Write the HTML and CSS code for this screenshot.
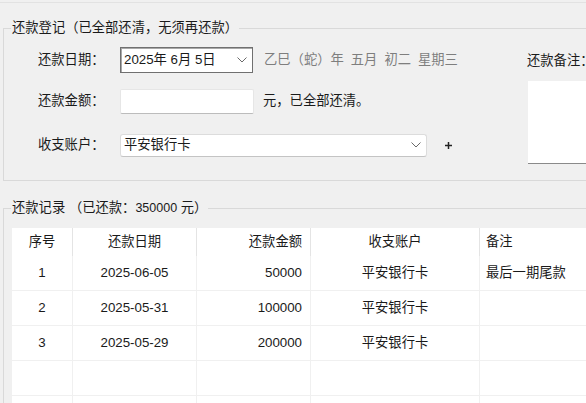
FILE: index.html
```html
<!DOCTYPE html>
<html lang="zh-CN">
<head>
<meta charset="utf-8">
<title>还款登记</title>
<link rel="stylesheet" href="styles.css">
</head>
<body>
<div class="topbar"></div>

<section class="group group-reg">
  <div class="group-title">还款登记（已全部还清，无须再还款）</div>
  <div class="reg-body">
    <div class="form">
      <div class="row row-date">
        <span class="label">还款日期：</span>
        <div class="datepicker">
          <span>2025年 6月 5日</span>
          <svg class="chev" width="10" height="6" viewBox="0 0 10 6"><path d="M0.5 0.5 L5 5 L9.5 0.5" fill="none" stroke="#6a6a6a" stroke-width="1"/></svg>
        </div>
        <span class="lunar">乙巳（蛇）年<span class="sp">五月</span><span class="sp">初二</span><span class="sp">星期三</span></span>
      </div>
      <div class="row row-amount">
        <span class="label">还款金额：</span>
        <div class="textbox"></div>
        <span class="note">元，已全部还清。</span>
      </div>
      <div class="row row-account">
        <span class="label">收支账户：</span>
        <div class="combo">
          <span>平安银行卡</span>
          <svg class="chev" width="10" height="6" viewBox="0 0 10 6"><path d="M0.5 0.5 L5 5 L9.5 0.5" fill="none" stroke="#6a6a6a" stroke-width="1"/></svg>
        </div>
        <svg class="plus" width="7" height="7" viewBox="0 0 7 7"><path d="M3.5 0 V7 M0 3.5 H7" stroke="#222" stroke-width="1.5"/></svg>
      </div>
    </div>
    <div class="remark">
      <div class="remark-label">还款备注：</div>
      <div class="remark-box"></div>
    </div>
  </div>
</section>

<section class="group group-rec">
  <div class="group-title">还款记录 （已还款：<span class="num">350000</span> 元）</div>
  <table class="records">
    <colgroup>
      <col class="c1"><col class="c2"><col class="c3"><col class="c4"><col class="c5">
    </colgroup>
    <thead>
      <tr>
        <th class="center">序号</th>
        <th class="center">还款日期</th>
        <th class="right">还款金额</th>
        <th class="center">收支账户</th>
        <th class="left">备注</th>
      </tr>
    </thead>
    <tbody>
      <tr>
        <td class="center">1</td>
        <td class="center">2025-06-05</td>
        <td class="right">50000</td>
        <td class="center">平安银行卡</td>
        <td class="left">最后一期尾款</td>
      </tr>
      <tr>
        <td class="center">2</td>
        <td class="center">2025-05-31</td>
        <td class="right">100000</td>
        <td class="center">平安银行卡</td>
        <td class="left"></td>
      </tr>
      <tr>
        <td class="center">3</td>
        <td class="center">2025-05-29</td>
        <td class="right">200000</td>
        <td class="center">平安银行卡</td>
        <td class="left"></td>
      </tr>
      <tr><td></td><td></td><td></td><td></td><td></td></tr>
      <tr><td></td><td></td><td></td><td></td><td></td></tr>
    </tbody>
  </table>
</section>
</body>
</html>
```

FILE: styles.css
```css
html, body {
  margin: 0;
  padding: 0;
  overflow: hidden;
}

body {
  width: 586px;
  height: 403px;
  background: #f0f0f0;
  color: #1a1a1a;
  font-family: "Liberation Sans", "Noto Sans CJK SC", sans-serif;
  font-size: 13.3px;
  line-height: 16px;
}

.topbar {
  height: 2px;
  border-bottom: 1px solid #e2e2e2;
}

.group {
  margin-left: 3px;
  border: 1px solid #d9d9d9;
  border-right: none;
}

.group-reg {
  margin-top: 25px;
}

.group-rec {
  margin-top: 27px;
}

.group-title {
  width: fit-content;
  margin: -9px 0 0 7px;
  padding: 0 1px;
  background: #f0f0f0;
  line-height: 16px;
  white-space: nowrap;
}

.group-title .num {
  font-size: 12.5px;
}

.reg-body {
  display: flex;
  align-items: flex-start;
}

.form {
  flex: none;
  width: 489px;
  padding-left: 34px;
  padding-bottom: 22px;
}

.row {
  display: flex;
  align-items: center;
  height: 26px;
  white-space: nowrap;
}

.row-date {
  margin-top: 11px;
}

.row-amount {
  margin-top: 15px;
}

.row-account {
  margin-top: 18px;
}

.label {
  flex: none;
  width: 82px;
}

.datepicker {
  flex: none;
  box-sizing: border-box;
  width: 133px;
  height: 26px;
  display: flex;
  align-items: center;
  padding-left: 3px;
  background: #fff;
  border: 1px solid #707070;
  box-shadow: inset 1px 1px 0 #a8a8a8;
}

.chev {
  flex: none;
  margin-left: auto;
  margin-right: 5px;
}

.lunar {
  margin-left: 11px;
  color: #7e7e7e;
}

.lunar .sp {
  margin-left: 7px;
}

.textbox {
  flex: none;
  box-sizing: border-box;
  width: 134px;
  height: 25px;
  background: #fff;
  border: 1px solid #e6e6e6;
  border-bottom-color: #bcbcbc;
  border-radius: 2px;
}

.note {
  margin-left: 9px;
}

.combo {
  flex: none;
  box-sizing: border-box;
  width: 307px;
  height: 23px;
  display: flex;
  align-items: center;
  padding-left: 3px;
  background: #fff;
  border: 1px solid #dcdcdc;
  border-bottom-color: #c4c4c4;
  border-radius: 3px;
}

.plus {
  flex: none;
  margin-left: 18px;
}

.remark {
  flex: none;
  width: 120px;
}

.remark-label {
  margin-top: 12px;
  height: 26px;
  line-height: 26px;
  white-space: nowrap;
}

.remark-box {
  box-sizing: border-box;
  margin-top: 7px;
  margin-left: 1px;
  height: 83px;
  background: #fff;
  border-bottom: 1px solid #8a8a8a;
}

.records {
  margin: 12px 0 0 8px;
  table-layout: fixed;
  border-collapse: separate;
  border-spacing: 0;
  width: 628px;
  background: #fff;
}

.c1 { width: 61px; }
.c2 { width: 124px; }
.c3 { width: 114px; }
.c4 { width: 169px; }
.c5 { width: 160px; }

.records th {
  padding: 0;
  height: 28px;
  line-height: 28px;
  font-weight: normal;
  border-right: 1px solid #e4e4e4;
  white-space: nowrap;
}

.records td {
  padding: 0;
  height: 34px;
  line-height: 34px;
  border-right: 1px solid #f0f0f0;
  border-bottom: 1px solid #f0f0f0;
  white-space: nowrap;
}

.records th:last-child,
.records td:last-child {
  border-right: none;
}

.center { text-align: center; }
.right { text-align: right; padding-right: 8px !important; }
.left { text-align: left; padding-left: 6px !important; }
```
